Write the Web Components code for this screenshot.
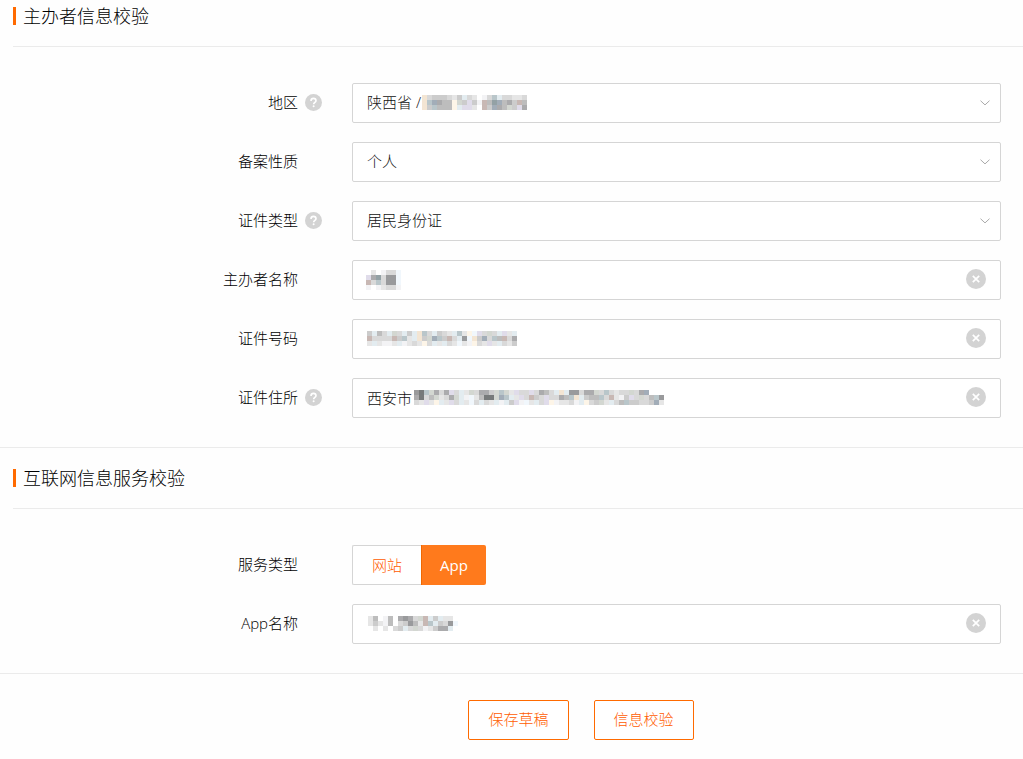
<!DOCTYPE html>
<html lang="zh-CN">
<head>
<meta charset="utf-8">
<meta name="viewport" content="width=device-width, initial-scale=1">
<title>信息校验</title>
<style>
  body {
    margin: 0;
    background: #fefefe;
    color: #000;
    font: 300 15px/20px "Open Sans", "Noto Sans CJK SC", sans-serif;
    --accent: #ff6a00;
    --accent-text: #ff5c00;
    --line: #ebebeb;
    --field-line: #d5d5d5;
  }
</style>
</head>
<body>
<verify-page></verify-page>
<script>
/* Privacy mosaic: each letter is one 5px cell taken from the palette. */
const PALETTE = {
  1: '#f3f3f5', 2: '#e6e6e6', 3: '#d9d9d9', 4: '#cccccc', 5: '#bdbdbd', 6: '#ababad', 7: '#999a9c', 8: '#777a7a',
  b: '#e3ecf0', c: '#b9c6ca', d: '#a2adb8', g: '#d3d7d1', o: '#f3e5d3', p: '#e0dcea', r: '#c8b8b4', y: '#fdf5e8', w: '#f1f7fc', t: '#93a1a5'
};
class MosaicMask extends HTMLElement {
  connectedCallback() {
    const rows = this.getAttribute('cells').split('/');
    const cols = Math.max(...rows.map(r => r.length));
    let cells = '';
    rows.forEach((row, y) => [...row].forEach((key, x) => {
      if (PALETTE[key]) cells += `<rect x="${x * 5}" y="${y * 5}" width="5" height="5" fill="${PALETTE[key]}"/>`;
    }));
    this.attachShadow({ mode: 'open' }).innerHTML = `
      <style>:host { display: block } svg { display: block }</style>
      <svg width="${cols * 5}" height="${rows.length * 5}" shape-rendering="crispEdges" aria-hidden="true">${cells}</svg>`;
  }
}
customElements.define('mosaic-mask', MosaicMask);

class FormRow extends HTMLElement {
  connectedCallback() {
    const help = this.hasAttribute('help') ? `
      <button class="help" type="button" aria-label="帮助">
        <svg width="17" height="17" viewBox="0 0 17 17"><circle cx="8.5" cy="8.5" r="8.5" fill="#d3d3d3"/>
          <path d="M6 6.9C6 5.3 7 4.4 8.5 4.4S11 5.3 11 6.7C11 8.3 8.6 8.4 8.6 10.2" fill="none" stroke="#fff" stroke-width="1.6"/>
          <circle cx="8.6" cy="12.2" r="1" fill="#fff"/></svg>
      </button>` : '';
    const value = this.getAttribute('value') || '';
    const kind = this.getAttribute('kind');
    let field = '<slot></slot>';
    if (kind === 'select') field = `
      <select id="field"><option>${value}</option></select>
      <svg class="arrow" width="10" height="6" viewBox="0 0 10 6" aria-hidden="true"><path d="M.5 .7 5 4.9 9.5 .7" fill="none" stroke="#aaa"/></svg>
      <slot></slot>`;
    if (kind === 'text') field = `
      <input id="field" type="text" value="${value}">
      <button class="clear" type="button" aria-label="清除">
        <svg width="20" height="20" viewBox="0 0 20 20"><circle cx="10" cy="10" r="10" fill="#d3d3d3"/>
          <path d="M6.8 6.8 13.2 13.2M13.2 6.8 6.8 13.2" stroke="#fff" stroke-width="1.7"/></svg>
      </button>
      <slot></slot>`;
    const label = kind ? `<label for="field">${this.getAttribute('label')}</label>` : `<span>${this.getAttribute('label')}</span>`;
    this.attachShadow({ mode: 'open' }).innerHTML = `
      <style>
        :host { display: grid; grid-template-columns: 298px 54px 1fr; align-items: center; min-height: 40px }
        .name { text-align: right; grid-column: 1; padding-bottom: 2px }
        .aid { padding: 0 7px 2px; display: flex }
        button { border: 0; padding: 0; background: none; display: flex; cursor: pointer }
        .field { position: relative; display: flex }
        input, select {
          box-sizing: border-box; width: 100%; height: 40px; margin: 0; padding: 0 50px 2px 14px;
          border: 1px solid var(--field-line); border-radius: 2px; background: #fff;
          font: inherit; color: #111; appearance: none; outline: 0;
        }
        .arrow { position: absolute; right: 11px; top: 17px; pointer-events: none }
        .clear { position: absolute; right: 15px; top: 9px }
        ::slotted(mosaic-mask) { position: absolute; top: var(--mask-top, 12px); left: var(--mask-start, 15px) }
      </style>
      <div class="name">${label}</div>
      <div class="aid">${help}</div>
      <div class="field">${field}</div>`;
  }
}
customElements.define('form-row', FormRow);

class SegmentedChoice extends HTMLElement {
  connectedCallback() {
    this.attachShadow({ mode: 'open' }).innerHTML = `
      <style>
        :host { display: flex }
        button {
          box-sizing: border-box; height: 40px; padding: 0 19px 1px; font: inherit; cursor: pointer;
          color: var(--accent-text); background: #fff; border: 1px solid var(--field-line); border-right: 0; border-radius: 2px 0 0 2px;
        }
        button[aria-pressed="true"] {
          padding: 0 18px 1px; color: #fff; font-weight: 400; background: #ff7a1c; border: 0; border-left: 1px solid #f06800; border-radius: 0 2px 2px 0;
        }
      </style>
      <button type="button" aria-pressed="false">网站</button><button type="button" aria-pressed="true">App</button>`;
  }
}
customElements.define('segmented-choice', SegmentedChoice);

class FormSection extends HTMLElement {
  connectedCallback() {
    this.attachShadow({ mode: 'open' }).innerHTML = `
      <style>
        :host { display: block; border-bottom: 1px solid var(--line) }
        header { margin-left: 13px; padding: var(--head-space, 21px) 0 21px; border-bottom: 1px solid var(--line) }
        h2 { margin: 0; padding-left: 7px; border-left: 3px solid var(--accent); font-size: 18px; line-height: 18px; font-weight: 300 }
        .rows { display: grid; gap: 19px; padding: 36px 22px 29px 0 }
      </style>
      <header><h2>${this.getAttribute('heading')}</h2></header>
      <div class="rows"><slot></slot></div>`;
  }
}
customElements.define('form-section', FormSection);

class ActionButton extends HTMLElement {
  connectedCallback() {
    this.attachShadow({ mode: 'open' }).innerHTML = `
      <style>
        :host { display: block }
        button {
          box-sizing: border-box; height: 40px; padding: 0 19px 2px; font: inherit; cursor: pointer;
          color: var(--accent-text); background: #fff; border: 1px solid var(--accent); border-radius: 2px;
        }
      </style>
      <button type="button"><slot></slot></button>`;
  }
}
customElements.define('action-button', ActionButton);

class VerifyPage extends HTMLElement {
  connectedCallback() {
    this.attachShadow({ mode: 'open' }).innerHTML = `
      <style>
        :host { display: block }
        .first { --head-space: 7px }
        .region { --mask-start: 70px }
        .person { --mask-start: 14px; --mask-top: 10px }
        .address { --mask-start: 62px }
        .app { --mask-start: 16px }
        footer { display: flex; justify-content: center; gap: 25px; padding: 26px 0 19px 139px }
      </style>
      <main>
        <form-section class="first" heading="主办者信息校验">
          <form-row kind="select" label="地区" help value="陕西省 /"><mosaic-mask class="region" cells="o3444324b32013cb33223/ocd655yg4p41r5td564r5/o4c555ybpp20r4d65g4p6"></mosaic-mask></form-row>
          <form-row kind="select" label="备案性质" value="个人"></form-row>
          <form-row kind="select" label="证件类型" help value="居民身份证"></form-row>
          <form-row kind="text" label="主办者名称"><mosaic-mask class="person" cells="020133w/p6t377w/r3c377w/1012331"></mosaic-mask></form-row>
          <form-row kind="text" label="证件号码"><mosaic-mask cells="4b53bg3b4boc3b432bc2ywp3g3bp2b/r3333r4c2bo4gdc4r3b7wo4d3c5r36/2b2112b1232y3b2b32w21y32p2b324"></mosaic-mask></form-row>
          <form-row kind="text" label="证件住所" help><mosaic-mask class="address" cells="78cg636p3b2g3664gcg2p33p3653bob77366g3c3233g36d/6835g236gb1w2588gdcb2p3r43p3365cob455c3r214p3g35c7/32p2yb2p3b2w3b32b1b4p1w2b3py12231by34g2b35c44334d2"></mosaic-mask></form-row>
        </form-section>
        <form-section heading="互联网信息服务校验">
          <form-row label="服务类型"><segmented-choice></segmented-choice></form-row>
          <form-row kind="text" label="App名称"><mosaic-mask class="app" cells="2501506763grb4b220/24215034752rcb437w/0202034b3g312466b0"></mosaic-mask></form-row>
        </form-section>
        <footer>
          <action-button>保存草稿</action-button>
          <action-button>信息校验</action-button>
        </footer>
      </main>`;
    const address = this.shadowRoot.querySelector('[label="证件住所"]');
    address.shadowRoot.querySelector('input').value = '西安市';
  }
}
customElements.define('verify-page', VerifyPage);
</script>
</body>
</html>
